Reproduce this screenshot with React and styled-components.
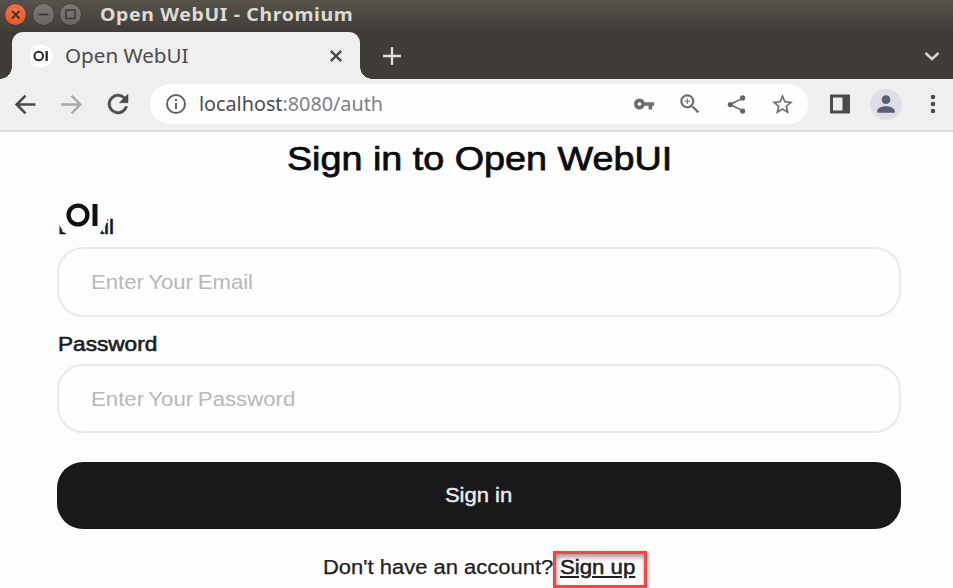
import React from "react";
import styled, { createGlobalStyle } from "styled-components";

const GlobalStyle = createGlobalStyle`
  *, *::before, *::after { box-sizing: border-box; }
  html, body { margin: 0; overflow: hidden; background: #fdfdfd; }
`;

const ui = `"Noto Sans", "Open Sans", sans-serif`;
const body = `"Liberation Sans", Arial, sans-serif`;

const Window = styled.div`
  width: 953px;
  height: 588px;
  overflow: hidden;
  background: #fdfdfd;
  font-family: ${body};
`;

/* Text widened or narrowed from its left edge (or centre) */
const Fit = styled.span`
  display: inline-block;
  white-space: pre;
  transform: scaleX(${(p) => p.$x});
  transform-origin: ${(p) => p.$from || "left"} center;
`;

const TitleBar = styled.header`
  height: 32px;
  display: flex;
  align-items: center;
  padding: 0 0 4px 5px;
  background: linear-gradient(#57534c, #403c38);
  color: #dfdbd2;
  font: 700 18px/28px ${ui};
`;

const WindowButton = styled.span`
  width: 21px;
  height: 21px;
  margin-right: 6.5px;
  border-radius: 50%;
  display: flex;
  background: ${(p) => (p.$close ? "radial-gradient(circle at 50% 30%, #f4764c, #e2501f)" : "linear-gradient(#7c7973, #6a6762)")};
  box-shadow: 0 0 0 0.5px #34312d;
`;

const WindowTitle = styled.div`
  margin-left: 12px;
  letter-spacing: 0.6px;
`;

const TabStrip = styled.div`
  height: 47px;
  display: flex;
  padding-left: 12px;
  background: #3f3b37;
  color: #e4e0da;
`;

const Tab = styled.div`
  position: relative;
  width: 348px;
  display: flex;
  align-items: center;
  padding: 0 15px 0 17px;
  border-radius: 11px 11px 0 0;
  background: #f0eff0;
  color: #4d4a4a;
  font: 400 20px/46px ${ui};
  &::before, &::after {
    content: "";
    position: absolute;
    bottom: 0;
    width: 12px;
    height: 12px;
  }
  &::before {
    left: -12px;
    background: radial-gradient(circle at 0 0, transparent 11.5px, #f0eff0 12px);
  }
  &::after {
    right: -12px;
    background: radial-gradient(circle at 100% 0, transparent 11.5px, #f0eff0 12px);
  }
`;

const TabTitle = styled.div`
  flex: 1;
  margin-left: 12px;
`;

const NewTab = styled.div`
  margin: 14px 0 0 22px;
  flex: 1;
`;

const TabMenu = styled.div`
  padding: 15px 12px 0 0;
`;

const Toolbar = styled.nav`
  height: 53px;
  display: flex;
  align-items: center;
  padding: 0 7px 1px 13px;
  border-bottom: 2px solid #dadada;
  background: #f0eff0;
`;

const Icon = styled.svg`
  display: block;
  flex: none;
  width: ${(p) => p.$w || 24}px;
  height: ${(p) => p.$w || 24}px;
  fill: ${(p) => p.$color || "#4d4a4a"};
  margin-left: ${(p) => p.$gap || 0}px;
`;

const AddressBar = styled.div`
  width: 658px;
  height: 40px;
  margin-left: 17px;
  padding: 0 13px 0 14px;
  display: flex;
  align-items: center;
  border-radius: 20px;
  background: #fefefe;
  font: 400 20px/40px ${ui};
  color: #4e4b4d;
`;

const Url = styled.div`
  flex: 1;
  margin-left: 11px;
`;

const UrlPath = styled.span`
  color: #828084;
`;

const Avatar = styled.div`
  width: 32px;
  height: 31px;
  margin-left: 20px;
  border-radius: 50%;
  background: #dfdde6;
  display: flex;
  align-items: center;
  justify-content: center;
`;

const Form = styled.main`
  padding: 0 52px 0 57px;
  display: flex;
  flex-direction: column;
`;

const Heading = styled.h1`
  margin: 6px 0 0;
  padding-left: 1px;
  height: 40px;
  text-align: center;
  font: 400 34px/40px ${body};
  color: #0b0b0d;
  -webkit-text-stroke: 0.75px #0b0b0d;
`;

const Label = styled.label`
  position: relative;
  display: block;
  height: 30px;
  padding-left: 1px;
  margin: ${(p) => p.$top}px 0 5px;
  font: 400 20px/30px ${body};
  color: #1b1b1e;
  -webkit-text-stroke: 0.6px #1b1b1e;
`;

/* Brand badge that sits over the first label */
const Badge = styled.div`
  position: absolute;
  left: 0;
  top: -24px;
  width: 51px;
  height: 52px;
  border-radius: 50%;
  background: #fdfdfd;
`;

const Field = styled.div`
  width: 844px;
  height: ${(p) => p.$h}px;
  padding: 1px 32px 0;
  display: flex;
  align-items: center;
  border: 2px solid #e9e9e9;
  border-radius: 26px;
  background: #fdfdfd;
  font: 400 20px ${body};
  word-spacing: -1.3px;
  color: #b9b7bc;
`;

const Submit = styled.button`
  width: 844px;
  height: 67px;
  margin-top: 29px;
  border: 0;
  border-radius: 26px;
  background: #19181b;
  color: #ececee;
  font: 400 20px ${body};
  -webkit-text-stroke: 0.4px #ececee;
`;

const Footer = styled.div`
  margin: 22px 0 0 266px;
  height: 37px;
  display: flex;
  font: 400 20px/33px ${body};
  color: #202023;
  -webkit-text-stroke: 0.25px #202023;
`;

const Question = styled.div`
  width: 230px;
  white-space: nowrap;
`;

const SignUp = styled.a`
  width: 94px;
  height: 37px;
  padding-left: 4px;
  border: 3px solid #f2444b;
  box-shadow: 1px 1px 3px #0005, inset 1px 3px 5px #0006;
  line-height: 27px;
  -webkit-text-stroke: 0.5px #202023;
`;

const Underlined = styled(Fit)`
  text-decoration: underline;
  text-decoration-thickness: 1.5px;
  text-underline-offset: 2px;
`;

const BrandMark = ({ size }) => (
  <Icon viewBox="0 0 51 51" $w={size} $color="#111">
    <circle cx="21" cy="27" r="9.4" fill="none" stroke="#111" strokeWidth="4.3" />
    <rect x="35.5" y="16" width="5" height="22" />
  </Icon>
);

const Favicon = () => (
  <Icon viewBox="0 0 24 24" $w={24}>
    <circle cx="12" cy="12" r="11.5" fill="#fff" />
    <circle cx="9.7" cy="12" r="4.3" fill="none" stroke="#29272b" strokeWidth="2" />
    <rect x="16.5" y="7" width="2.3" height="10" fill="#29272b" />
  </Icon>
);

export default function App() {
  return (
    <>
      <GlobalStyle />
      <Window>
        <TitleBar>
          <WindowButton $close>
            <Icon viewBox="0 0 21 21" $w={21}><path d="M7 7l7.5 7.5M14.5 7L7 14.5" stroke="#55301f" strokeWidth="2" /></Icon>
          </WindowButton>
          <WindowButton>
            <Icon viewBox="0 0 21 21" $w={21}><path d="M5.5 10.5h10" stroke="#3d3a36" strokeWidth="1.7" /></Icon>
          </WindowButton>
          <WindowButton>
            <Icon viewBox="0 0 21 21" $w={21}><rect x="6" y="6" width="9" height="8.5" fill="none" stroke="#3d3a36" strokeWidth="1.5" /></Icon>
          </WindowButton>
          <WindowTitle><Fit $x={1.08}>Open WebUI - Chromium</Fit></WindowTitle>
        </TitleBar>

        <TabStrip>
          <Tab>
            <Favicon />
            <TabTitle><Fit $x={1.03}>Open WebUI</Fit></TabTitle>
            <Icon viewBox="0 0 18 18" $w={18}><path d="M3.8 3.8l10.4 10.4M14.2 3.8L3.8 14.2" stroke="#4a4747" strokeWidth="2.4" /></Icon>
          </Tab>
          <NewTab>
            <Icon viewBox="0 0 20 20" $w={20}><path d="M1 10h18M10 1v18" stroke="#e4e0da" strokeWidth="2.3" /></Icon>
          </NewTab>
          <TabMenu>
            <Icon viewBox="0 0 18 18" $w={18}><path d="M2.5 6l6.5 6 6.5-6" fill="none" stroke="#d9d5cf" strokeWidth="2.4" /></Icon>
          </TabMenu>
        </TabStrip>

        <Toolbar>
          <Icon viewBox="0 0 24 24" $w={25}><path d="M21.500 12H4M12 3.500L3.500 12l8.500 8.500" fill="none" stroke="#4d4848" strokeWidth="2.5" /></Icon>
          <Icon viewBox="0 0 24 24" $w={25} $gap={21}><path d="M2 12h17.500M12 3.500l8.500 8.500-8.500 8.500" fill="none" stroke="#a9a7a7" strokeWidth="2.3" /></Icon>
          <Icon viewBox="0 0 24 24" $w={30} $gap={19}><path d="M17.65 6.35A7.96 7.96 0 0 0 12 4a8 8 0 1 0 7.73 10h-2.08A6 6 0 1 1 12 6c1.66 0 3.14.69 4.22 1.78L13 11h7V4z" stroke="#4d4a4a" strokeWidth="0.4" /></Icon>
          <AddressBar>
            <Icon viewBox="0 0 24 24" $w={24} $color="#656267"><path d="M11 7h2v2h-2zm0 4h2v6h-2zm1-9a10 10 0 1 0 0 20 10 10 0 0 0 0-20zm0 18a8 8 0 1 1 0-16 8 8 0 0 1 0 16z" /></Icon>
            <Url><Fit $x={0.988}>localhost<UrlPath>:8080/auth</UrlPath></Fit></Url>
            <Icon viewBox="0 0 24 24" $w={22} $color="#706e71"><path d="M12.65 10A5.99 5.99 0 0 0 7 6a6 6 0 0 0 0 12 5.99 5.99 0 0 0 5.65-4H17v4h4v-4h2v-4zM7 14a2 2 0 1 1 0-4 2 2 0 0 1 0 4z" /></Icon>
            <Icon viewBox="0 0 24 24" $w={26} $gap={22} $color="#706e71"><path d="M15.5 14h-.79l-.28-.27A6.47 6.47 0 0 0 16 9.5 6.5 6.5 0 1 0 9.5 16c1.61 0 3.09-.59 4.23-1.57l.27.28v.79l5 4.99L20.49 19zm-6 0a4.5 4.5 0 1 1 0-9 4.5 4.5 0 0 1 0 9zM12 10h-2v2H9v-2H7V9h2V7h1v2h2z" /></Icon>
            <Icon viewBox="0 0 24 24" $w={21} $gap={23} $color="#656366"><path d="M19 5L4.500 12 19 19" fill="none" stroke="#656366" strokeWidth="1.8" /><circle cx="19" cy="4.500" r="3" /><circle cx="5" cy="12" r="3" /><circle cx="19" cy="19.500" r="3" /></Icon>
            <Icon viewBox="0 0 24 24" $w={25} $gap={23} $color="#706e71"><path d="M22 9.240l-7.190-.620L12 2 9.190 8.630 2 9.240l5.460 4.730L5.820 21 12 17.270 18.180 21l-1.630-7.030zM12 15.400l-3.760 2.270 1-4.280-3.320-2.880 4.380-.380L12 6.100l1.710 4.040 4.380.380-3.320 2.880 1 4.280z" /></Icon>
          </AddressBar>
          <Icon viewBox="0 0 20 20" $w={20} $gap={22}><path fillRule="evenodd" d="M0 .5h20v19H0zM3 3.500v13h9.500v-13z" /></Icon>
          <Avatar>
            <Icon viewBox="0 0 24 24" $w={26} $color="#565d76"><path d="M12 12a4 4 0 1 0 0-8 4 4 0 0 0 0 8zm0 2c-2.670 0-8 1.340-8 4v2h16v-2c0-2.660-5.330-4-8-4z" /></Icon>
          </Avatar>
          <Icon viewBox="0 0 24 24" $w={24} $gap={19}><circle cx="12" cy="5" r="2.300" /><circle cx="12" cy="12" r="2.300" /><circle cx="12" cy="19" r="2.300" /></Icon>
        </Toolbar>

        <Form>
          <Heading><Fit $x={1.11} $from="center">Sign in to Open WebUI</Fit></Heading>
          <Label $top={34}>
            <Fit $x={1.12}>Email</Fit>
            <Badge><BrandMark size={51} /></Badge>
          </Label>
          <Field $h={70} role="textbox"><Fit $x={1.107}>Enter Your Email</Fit></Field>
          <Label $top={12}><Fit $x={1.13}>Password</Fit></Label>
          <Field $h={69} role="textbox"><Fit $x={1.109}>Enter Your Password</Fit></Field>
          <Submit><Fit $x={1.1} $from="center">Sign in</Fit></Submit>
          <Footer>
            <Question><Fit $x={1.099}>Don't have an account?</Fit></Question>
            <SignUp><Underlined $x={1.11}>Sign up</Underlined></SignUp>
          </Footer>
        </Form>
      </Window>
    </>
  );
}
